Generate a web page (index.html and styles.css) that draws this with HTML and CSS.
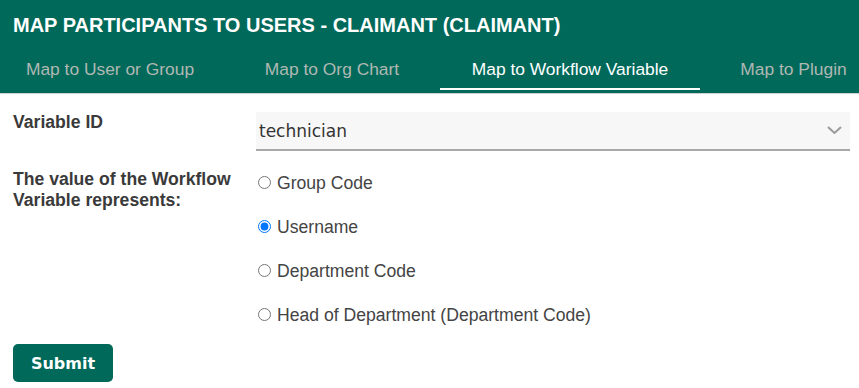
FILE: index.html
```html
<!DOCTYPE html>
<html lang="en">
<head>
    <meta charset="UTF-8">
    <meta name="viewport" content="width=device-width, initial-scale=1.0">
    <title>Map Participants to Users</title>
    <link rel="stylesheet" href="styles.css">
</head>
<body>
    <div class="header">
        <h1 class="title">MAP PARTICIPANTS TO USERS - CLAIMANT (CLAIMANT)</h1>
        <div class="tabs">
            <a class="tab tab-user">Map to User or Group</a>
            <a class="tab tab-org">Map to Org Chart</a>
            <a class="tab tab-var active">Map to Workflow Variable</a>
            <a class="tab tab-plugin">Map to Plugin</a>
        </div>
    </div>

    <form class="map-form" id="mapForm">
        <div class="form-grid">
            <label class="field-label" for="variableId">Variable ID</label>
            <div class="select-box" id="variableId">
                <span class="select-value">technician</span>
                <svg class="chevron" width="15" height="8" viewBox="0 0 15 8">
                    <path d="M1 1 L7.5 7 L14 1" fill="none" stroke="#9a9a9a" stroke-width="2"/>
                </svg>
            </div>

            <div class="field-label">The value of the Workflow Variable represents:</div>
            <div class="radio-list">
                <label class="radio-option"><input type="radio" name="represents" value="group"> Group Code</label>
                <label class="radio-option"><input type="radio" name="represents" value="username" checked> Username</label>
                <label class="radio-option"><input type="radio" name="represents" value="dept"> Department Code</label>
                <label class="radio-option"><input type="radio" name="represents" value="hod"> Head of Department (Department Code)</label>
            </div>
        </div>
        <button type="submit" class="submit-btn">Submit</button>
    </form>
</body>
</html>
```

FILE: styles.css
```css
body { margin: 0; font-family: "Liberation Sans", Arial, sans-serif; color: #333; background: #fff; }

.header { background-color: #00695a; padding: 14px 0 3px 0; border-bottom: 1px solid #cfcfcf; }
.title { margin: 0 0 0 13px; font-size: 20px; line-height: 23px; font-weight: bold; color: #fff; }

.tabs { display: flex; flex-wrap: nowrap; overflow: hidden; margin-top: 22px; }
.tab { flex: 0 0 auto; text-align: center; font-size: 17.4px; line-height: 21px; color: #b0b8b3; padding-bottom: 8px; border-bottom: 2px solid transparent; cursor: pointer; }
.tab-user { width: 220px; }
.tab-org { width: 220px; padding-left: 4px; box-sizing: border-box; }
.tab-var { width: 260px; }
.tab-plugin { width: 187px; }
.tab.active { color: #fff; border-bottom-color: #fff; }

.map-form { padding: 18px 9px 0 13px; }
.form-grid { display: grid; grid-template-columns: 243px 1fr; row-gap: 18px; align-items: start; }

.field-label { font-size: 17.6px; line-height: 21px; font-weight: bold; color: #3a3a3a; padding-right: 8px; }

.select-box { display: flex; align-items: center; justify-content: space-between; height: 37px; padding: 0 8px 0 3px; background-color: #f7f7f7; border-bottom: 2px solid #a8a8a8; font-family: "DejaVu Sans", Verdana, sans-serif; font-size: 17px; line-height: 20px; color: #333; }
.chevron { display: block; margin-top: -1px; }

.radio-list { display: flex; flex-direction: column; gap: 23px; padding-top: 4px; }
.radio-option { display: flex; align-items: center; font-size: 17.6px; line-height: 21px; color: #444; cursor: pointer; }
.radio-option input { margin: 0 6px 2px 2px; width: 13px; height: 13px; }

.submit-btn { margin-top: 18px; width: 100px; height: 38px; padding: 0; background-color: #00695a; color: #fff; border: none; border-radius: 5px; font-family: "DejaVu Sans", Verdana, sans-serif; font-size: 16px; font-weight: 600; cursor: pointer; }
```
